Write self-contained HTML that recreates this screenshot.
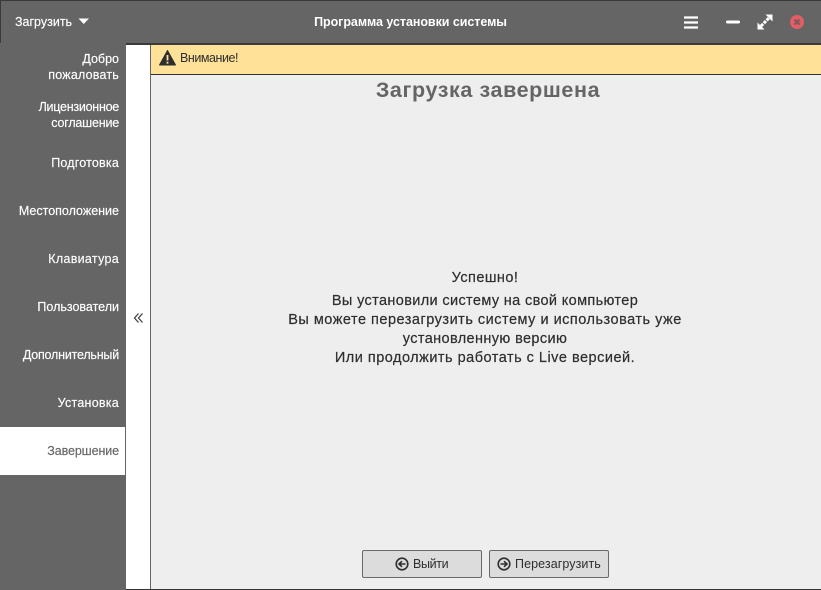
<!DOCTYPE html>
<html><head><meta charset="utf-8"><style>
html,body{margin:0;padding:0;width:821px;height:590px;overflow:hidden;background:#fff;font-family:"Liberation Sans",sans-serif}
div{position:absolute;white-space:nowrap}
.s{right:702px;color:#fff;font-size:12.5px;line-height:16px;text-align:right;-webkit-text-stroke:.15px #fff}
.c{left:150px;width:670px;text-align:center;color:#2e2e2e;font-size:14.5px;line-height:19px;-webkit-text-stroke:.2px #2e2e2e}
.b{top:550px;height:28px;background:#dcdcdc;border:1px solid #6a6a6a;border-radius:2px;box-sizing:border-box}
.bt{top:550px;height:28px;line-height:28px;font-size:12.5px;color:#2e2e2e}
</style></head><body>
<div style="left:0;top:0;width:821px;height:44px;background:#656565;border-top:1px solid #3a3a3a;box-sizing:border-box"></div>
<div style="left:0;top:0;width:1px;height:43px;background:#3a3a3a"></div>
<div style="left:125px;top:43px;width:696px;height:2px;background:#3a3a3a"></div>
<div style="left:0;top:43px;width:126px;height:547px;background:#656565"></div>
<div style="left:0;top:427px;width:125px;height:48px;background:#fff"></div>
<div style="left:126px;top:45px;width:25px;height:545px;background:#fff"></div>
<div style="left:150px;top:45px;width:1px;height:545px;background:#656565"></div>
<div style="left:151px;top:45px;width:670px;height:545px;background:#eeeeee"></div>
<div style="left:151px;top:45px;width:670px;height:29px;background:#ffe297"></div>
<div style="left:151px;top:74px;width:670px;height:1px;background:#333"></div>
<div style="left:126px;top:589px;width:695px;height:1px;background:#333"></div>

<div style="left:15px;top:14px;color:#fff;font-size:12.5px;line-height:16px;-webkit-text-stroke:.15px #fff">Загрузить</div>
<svg style="position:absolute;left:78px;top:18px" width="12" height="8"><path d="M0.5 0.5H11L5.7 6Z" fill="#fff"/></svg>
<div style="left:0;top:14px;width:821px;text-align:center;color:#fff;font-size:12.5px;line-height:16px;font-weight:bold;letter-spacing:-.05px">Программа установки системы</div>
<svg style="position:absolute;left:684px;top:16px" width="14" height="13"><path d="M0 1.5H14M0 6.5H14M0 11.5H14" stroke="#fff" stroke-width="2.2"/></svg>
<svg style="position:absolute;left:726px;top:19px" width="14" height="6"><path d="M1.5 3H12.5" stroke="#fff" stroke-width="3" stroke-linecap="round"/></svg>
<svg style="position:absolute;left:757px;top:14px" width="16" height="16"><path d="M4 12L12 4" stroke="#fff" stroke-width="3" stroke-dasharray="3 1"/><path d="M8.5 0.5H15.5V7.5ZM7.5 15.5H0.5V8.5Z" fill="#fff"/></svg>
<svg style="position:absolute;left:789px;top:14px" width="16" height="16"><circle cx="8" cy="8" r="7" fill="#e25d64"/><path d="M5.5 5.5L10.5 10.5M10.5 5.5L5.5 10.5" stroke="#7c5a5c" stroke-width="2.2"/></svg>

<div class="s" style="top:51px">Добро<br><span style="letter-spacing:.2px">пожаловать</span></div>
<div class="s" style="top:99px"><span style="letter-spacing:-.25px">Лицензионное</span><br><span style="letter-spacing:-.2px">соглашение</span></div>
<div class="s" style="top:155px;letter-spacing:.2px">Подготовка</div>
<div class="s" style="top:203px">Местоположение</div>
<div class="s" style="top:251px;letter-spacing:.3px">Клавиатура</div>
<div class="s" style="top:299px">Пользователи</div>
<div class="s" style="top:347px;letter-spacing:-.2px">Дополнительный</div>
<div class="s" style="top:395px;letter-spacing:.25px">Установка</div>
<div class="s" style="top:443px;color:#656565;-webkit-text-stroke:.15px #656565;letter-spacing:-.1px">Завершение</div>

<svg style="position:absolute;left:133px;top:312px" width="11" height="12"><path d="M5.5 1.5L1.5 6L5.5 10.5M9.5 1.5L5.5 6L9.5 10.5" fill="none" stroke="#444" stroke-width="1.3"/></svg>

<svg style="position:absolute;left:159px;top:50px" width="17" height="16"><path d="M8.5 0.5L16.5 15H0.5Z" fill="#2e2e2e" stroke="#2e2e2e" stroke-linejoin="round"/><path d="M8.5 5V10.5M8.5 11.7V13.6" stroke="#ffe297" stroke-width="1.8"/></svg>
<div style="left:180px;top:50px;color:#2e2e2e;font-size:12.5px;line-height:16px;letter-spacing:-.45px">Внимание!</div>

<div style="left:153px;width:670px;top:76px;text-align:center;color:#656565;font-size:21.5px;line-height:28px;font-weight:bold;letter-spacing:.6px">Загрузка завершена</div>

<div class="c" style="top:269px;letter-spacing:.45px">Успешно!</div>
<div class="c" style="top:292px;letter-spacing:.36px">Вы установили систему на свой компьютер</div>
<div class="c" style="top:311px;letter-spacing:.5px">Вы можете перезагрузить систему и использовать уже</div>
<div class="c" style="top:330px;letter-spacing:.38px">установленную версию</div>
<div class="c" style="top:349px;letter-spacing:.49px">Или продолжить работать с Live версией.</div>

<div class="b" style="left:362px;width:120px"></div>
<div class="b" style="left:489px;width:120px"></div>
<svg style="position:absolute;left:395px;top:557px" width="14" height="14"><circle cx="7" cy="7" r="5.8" fill="none" stroke="#2e2e2e" stroke-width="1.6"/><path d="M10.5 7H5M7 4.2L4 7L7 9.8" fill="none" stroke="#2e2e2e" stroke-width="1.6"/></svg>
<div class="bt" style="left:413px;letter-spacing:-.35px">Выйти</div>
<svg style="position:absolute;left:497px;top:557px" width="14" height="14"><circle cx="7" cy="7" r="5.8" fill="none" stroke="#2e2e2e" stroke-width="1.6"/><path d="M3.5 7H9M7 4.2L10 7L7 9.8" fill="none" stroke="#2e2e2e" stroke-width="1.6"/></svg>
<div class="bt" style="left:515px;letter-spacing:.08px">Перезагрузить</div>
</body></html>
